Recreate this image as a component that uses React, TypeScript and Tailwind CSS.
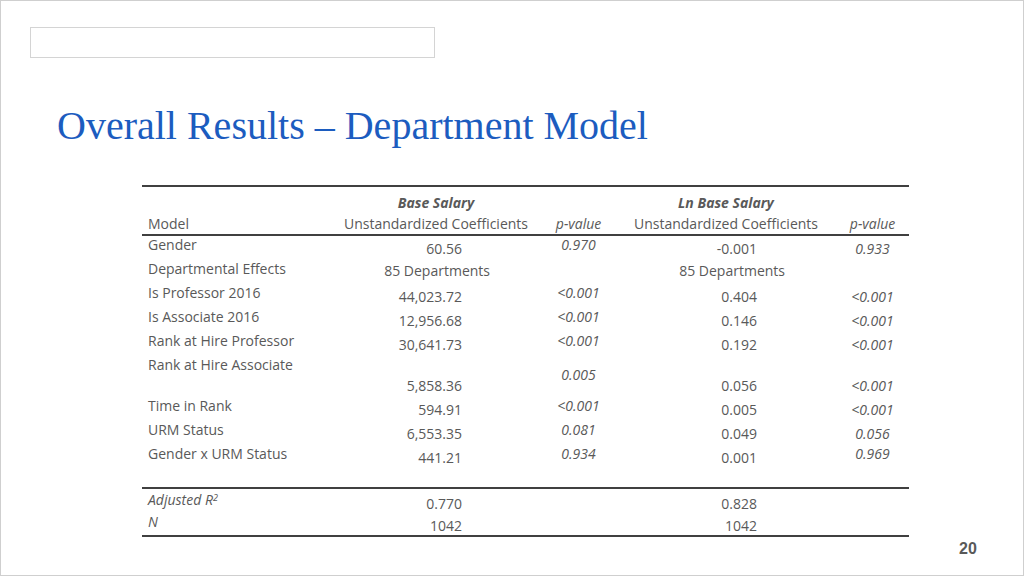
const font = { fontFamily: "'Open Sans', Lato, sans-serif" };

type Row = { label: React.ReactNode; h: number; c: [string, number, boolean, string?][] };

// each cell: text, top offset, italic, align
const rows: Row[] = [
  { label: "Gender", h: 24, c: [["60.56", 4, false], ["0.970", 0, true], ["-0.001", 4, false], ["0.933", 4, true]] },
  { label: "Departmental Effects", h: 24, c: [["85 Departments", 2, false, "c"], ["", 0, true], ["85 Departments", 2, false, "c"], ["", 0, true]] },
  { label: "Is Professor 2016", h: 24, c: [["44,023.72", 4, false], ["<0.001", 0, true], ["0.404", 4, false], ["<0.001", 4, true]] },
  { label: "Is Associate 2016", h: 24, c: [["12,956.68", 4, false], ["<0.001", 0, true], ["0.146", 4, false], ["<0.001", 4, true]] },
  { label: "Rank at Hire Professor", h: 24, c: [["30,641.73", 4, false], ["<0.001", 0, true], ["0.192", 4, false], ["<0.001", 4, true]] },
  { label: "Rank at Hire Associate", h: 41, c: [["5,858.36", 21, false], ["0.005", 10, true], ["0.056", 21, false], ["<0.001", 21, true]] },
  { label: "Time in Rank", h: 24, c: [["594.91", 4, false], ["<0.001", 0, true], ["0.005", 4, false], ["<0.001", 4, true]] },
  { label: "URM Status", h: 24, c: [["6,553.35", 4, false], ["0.081", 0, true], ["0.049", 4, false], ["0.056", 4, true]] },
  { label: "Gender x URM Status", h: 24, c: [["441.21", 4, false], ["0.934", 0, true], ["0.001", 4, false], ["0.969", 0, true]] },
];

const widths = ["w-[189px]", "w-[210px]", "w-[75px]", "w-[220px]", "w-[73px]"];

function Cells({ c }: { c: Row["c"] }) {
  return (
    <>
      {c.map(([t, top, it, al], i) => {
        const coeff = i === 0 || i === 2;
        return (
          <div
            key={i}
            style={{ paddingTop: top }}
            className={`${widths[i + 1]} ${coeff ? (al === "c" ? "text-right pr-[51px]" : "text-right pr-[79px]") : "text-center"} ${it ? "italic" : ""}`}
          >
            {t}
          </div>
        );
      })}
    </>
  );
}

export default function App() {
  return (
    <div className="w-[1024px] h-[576px] bg-white border border-[#cfcfcf] relative overflow-hidden" style={font}>
      <div className="ml-[29px] mt-[26px] w-[405px] h-[31px] border border-[#d4d4d4]" />
      <h1 className="ml-[56px] mt-[46px] text-[40px] leading-[44px] text-[#1c5cbf]" style={{ fontFamily: "'Liberation Serif', serif" }}>
        Overall Results – Department Model
      </h1>
      <div className="ml-[141px] mt-[37px] w-[767px] text-[14px] leading-[18px] text-[#595959]">
        <div className="border-t-2 border-[#404040] pt-[7px] pb-[1px] border-b-2 border-b-[#404040] flex">
          <div className={`${widths[0]} pl-[6px] pt-[21px]`}>Model</div>
          <div className={`${widths[1]} text-center`}>
            <div className="italic font-bold pb-[3px]">Base Salary</div>
            <div>Unstandardized Coefficients</div>
          </div>
          <div className={`${widths[2]} italic text-center pt-[21px]`}>p-value</div>
          <div className={`${widths[3]} text-center`}>
            <div className="italic font-bold pb-[3px]">Ln Base Salary</div>
            <div>Unstandardized Coefficients</div>
          </div>
          <div className={`${widths[4]} italic text-center pt-[21px]`}>p-value</div>
        </div>
        {rows.map((r, i) => (
          <div key={i} className="flex" style={{ height: r.h }}>
            <div className={`${widths[0]} pl-[6px]`}>{r.label}</div>
            <Cells c={r.c} />
          </div>
        ))}
        <div className="h-[20px] border-b-2 border-[#404040]" />
        <div className="flex h-[24px] pt-[2px]">
          <div className={`${widths[0]} pl-[6px] italic`}>
            Adjusted R<sup className="text-[9px]">2</sup>
          </div>
          <Cells c={[["0.770", 4, false], ["", 0, false], ["0.828", 4, false], ["", 0, false]]} />
        </div>
        <div className="flex h-[24px] border-b-2 border-[#404040]">
          <div className={`${widths[0]} pl-[6px] italic`}>N</div>
          <Cells c={[["1042", 4, false], ["", 0, false], ["1042", 4, false], ["", 0, false]]} />
        </div>
      </div>
      <div className="absolute left-[958px] top-[536px] text-[16px] font-bold text-[#595959]" style={{ fontFamily: "'Liberation Sans', sans-serif" }}>
        20
      </div>
    </div>
  );
}
